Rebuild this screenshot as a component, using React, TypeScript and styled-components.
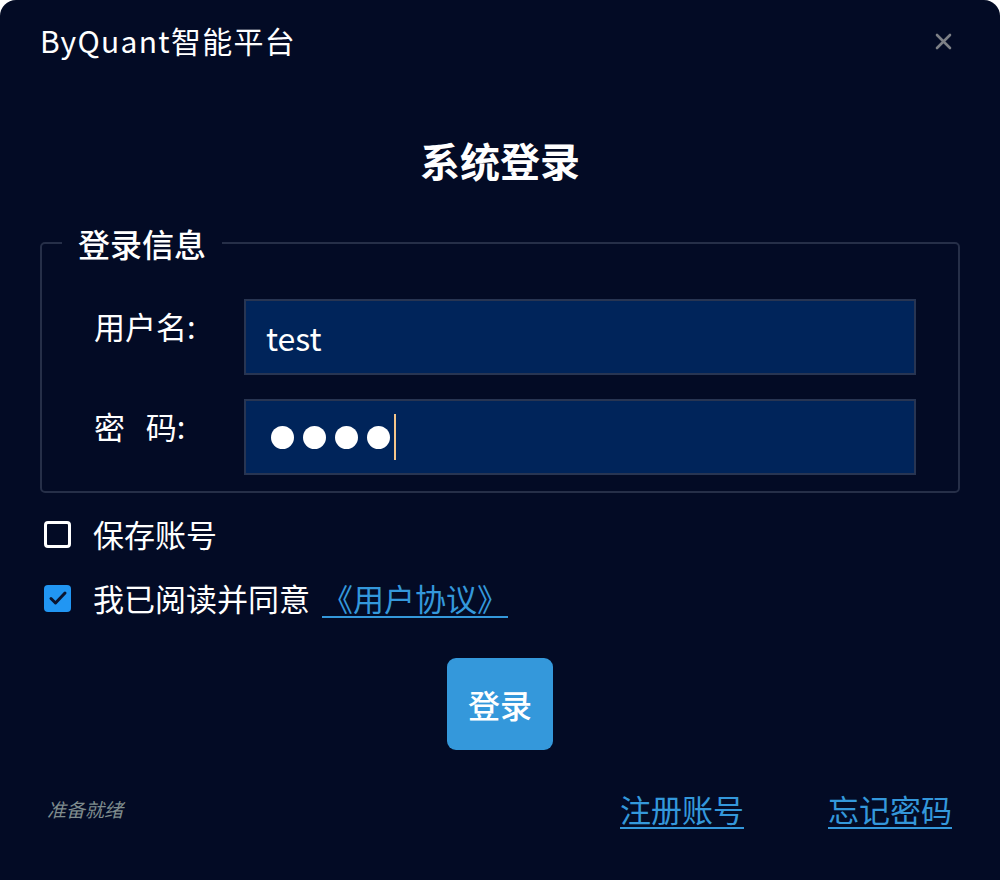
import React from "react";
import styled, { createGlobalStyle } from "styled-components";

const Global = createGlobalStyle`
  html, body { margin: 0; padding: 0; background: #ffffff; }
  body { font-family: "Noto Sans CJK SC", "Noto Sans", sans-serif; }
`;

const Window = styled.div`
  width: 1000px;
  height: 880px;
  background: #030b25;
  border-radius: 16px 16px 0 0;
  color: #ffffff;
  display: flex;
  flex-direction: column;
  box-sizing: border-box;
  font-family: "Noto Sans CJK SC", "Noto Sans", sans-serif;
`;

const TitleBar = styled.div`
  height: 84px;
  display: flex;
  align-items: center;
  justify-content: space-between;
  padding: 0 48px 0 40px;
  box-sizing: border-box;
`;

const Title = styled.div`
  font-size: 30px;
  letter-spacing: 1.3px;
  color: #ffffff;
  margin-top: -4px;
`;

const Close = styled.div`
  display: flex;
  align-items: center;
  margin-top: -1px;
`;

const Heading = styled.h1`
  margin: 48px 0 0;
  font-size: 40px;
  font-weight: 700;
  text-align: center;
  line-height: 56px;
`;

const Group = styled.fieldset`
  margin: 33px 40px 0 40px;
  border: 2px solid #262f48;
  border-radius: 5px;
  padding: 34px 42px 16px 0;
  display: flex;
  flex-direction: column;
  gap: 24px;
`;

const Legend = styled.legend`
  font-size: 32px;
  font-weight: 500;
  padding: 0 16px;
  margin-left: 20px;
  line-height: 44px;
`;

const Row = styled.div`
  display: flex;
  align-items: center;
  padding-left: 52px;
`;

const Label = styled.div`
  width: 150px;
  font-size: 31px;
  white-space: pre;
  margin-top: -24px;
`;

const Field = styled.div`
  flex: 1;
  height: 76px;
  background: #00245a;
  border: 2px solid #283552;
  box-sizing: border-box;
  display: flex;
  align-items: center;
  padding-left: 20px;
  font-size: 32px;
  color: #ffffff;
`;

const Dot = styled.span`
  width: 23px;
  height: 23px;
  border-radius: 50%;
  background: #ffffff;
  margin-left: 9px;
  &:first-child { margin-left: 5px; }
`;

const Caret = styled.span`
  width: 2px;
  height: 46px;
  background: #f3c58a;
  margin-left: 4px;
`;

const Checks = styled.div`
  margin: 19px 0 0 44px;
  display: flex;
  flex-direction: column;
  gap: 20px;
`;

const CheckRow = styled.div`
  display: flex;
  align-items: center;
  font-size: 31px;
  line-height: 44px;
`;

const Box = styled.span<{ $checked?: boolean }>`
  width: 27px;
  height: 27px;
  box-sizing: border-box;
  border-radius: 4px;
  border: ${(p) => (p.$checked ? "none" : "3px solid #ffffff")};
  background: ${(p) => (p.$checked ? "#2196f3" : "transparent")};
  display: flex;
  align-items: center;
  justify-content: center;
  margin-right: 22px;
`;

const Link = styled.a`
  color: #3498db;
  text-decoration: underline;
  text-underline-offset: 5px;
  text-decoration-thickness: 2px;
  cursor: pointer;
`;

const AgreeLink = styled(Link)`
  margin-left: 12px;
`;

const ButtonWrap = styled.div`
  display: flex;
  justify-content: center;
  margin-top: 38px;
`;

const LoginButton = styled.button`
  width: 106px;
  height: 92px;
  border: none;
  border-radius: 9px;
  background: #3498db;
  color: #ffffff;
  font-size: 32px;
  font-weight: 500;
  font-family: inherit;
  padding: 0;
`;

const Footer = styled.div`
  margin-top: 36px;
  display: flex;
  align-items: center;
  padding: 0 48px 0 47px;
`;

const Status = styled.div`
  font-size: 19px;
  font-style: italic;
  color: #7f8c8d;
  flex: 1;
`;

const FooterLinks = styled.div`
  display: flex;
  gap: 84px;
  font-size: 31px;
`;

export default function App() {
  return (
    <>
      <Global />
      <Window>
        <TitleBar>
          <Title>ByQuant智能平台</Title>
          <Close>
            <svg width="17" height="17" viewBox="0 0 17 17">
              <path d="M2 2 L15 15 M15 2 L2 15" stroke="#7d8086" strokeWidth="2.6" strokeLinecap="round" />
            </svg>
          </Close>
        </TitleBar>
        <Heading>系统登录</Heading>
        <Group>
          <Legend>登录信息</Legend>
          <Row>
            <Label>用户名:</Label>
            <Field>test</Field>
          </Row>
          <Row>
            <Label>{"密   码:"}</Label>
            <Field>
              <Dot />
              <Dot />
              <Dot />
              <Dot />
              <Caret />
            </Field>
          </Row>
        </Group>
        <Checks>
          <CheckRow>
            <Box />
            保存账号
          </CheckRow>
          <CheckRow>
            <Box $checked>
              <svg width="20" height="16" viewBox="0 0 20 16">
                <path d="M3 8.5 L7.5 13 L17 3" fill="none" stroke="#0b1530" strokeWidth="3" strokeLinecap="round" strokeLinejoin="round" />
              </svg>
            </Box>
            我已阅读并同意
            <AgreeLink>《用户协议》</AgreeLink>
          </CheckRow>
        </Checks>
        <ButtonWrap>
          <LoginButton>登录</LoginButton>
        </ButtonWrap>
        <Footer>
          <Status>准备就绪</Status>
          <FooterLinks>
            <Link>注册账号</Link>
            <Link>忘记密码</Link>
          </FooterLinks>
        </Footer>
      </Window>
    </>
  );
}
